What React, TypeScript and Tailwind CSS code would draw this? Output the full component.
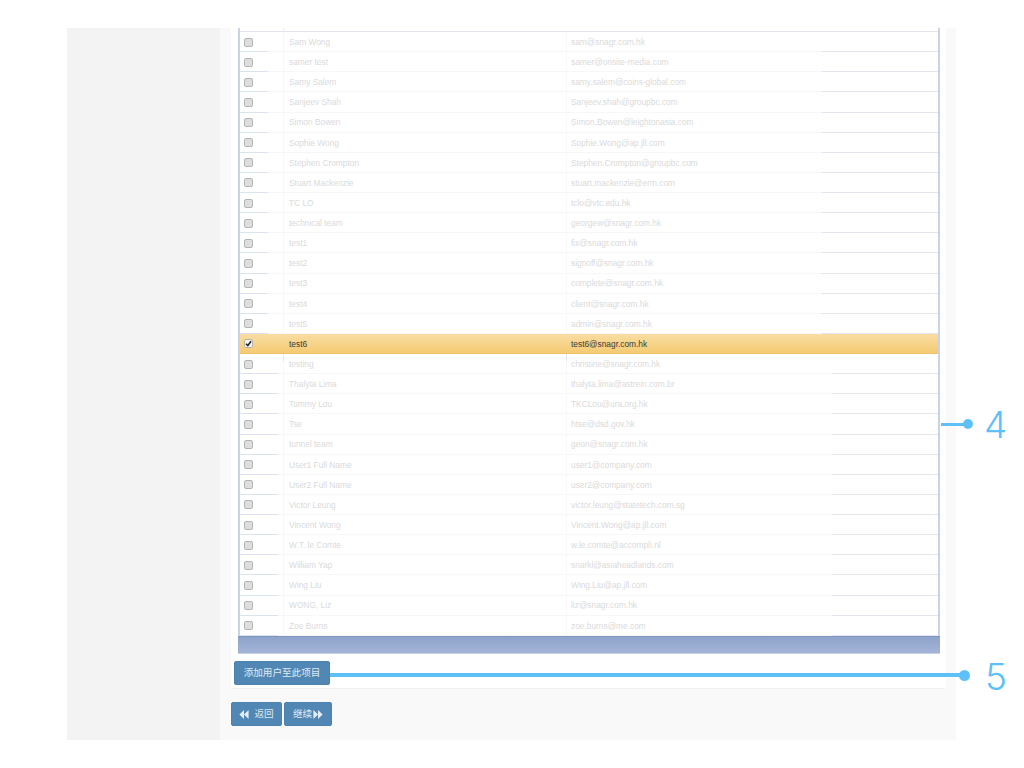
const USERS = [
  ["Sam Wong", "sam@snagr.com.hk"],
  ["samer test", "samer@onsite-media.com"],
  ["Samy Salem", "samy.salem@coins-global.com"],
  ["Sanjeev Shah", "Sanjeev.shah@groupbc.com"],
  ["Simon Bowen", "Simon.Bowen@leightonasia.com"],
  ["Sophie Wong", "Sophie.Wong@ap.jll.com"],
  ["Stephen Crompton", "Stephen.Crompton@groupbc.com"],
  ["Stuart Mackenzie", "stuart.mackenzie@erm.com"],
  ["TC LO", "tclo@vtc.edu.hk"],
  ["technical team", "georgew@snagr.com.hk"],
  ["test1", "fix@snagr.com.hk"],
  ["test2", "signoff@snagr.com.hk"],
  ["test3", "complete@snagr.com.hk"],
  ["test4", "client@snagr.com.hk"],
  ["test5", "admin@snagr.com.hk"],
  ["test6", "test6@snagr.com.hk"],
  ["testing", "christine@snagr.com.hk"],
  ["Thalyta Lima", "thalyta.lima@astrein.com.br"],
  ["Tommy Lou", "TKCLou@ura.org.hk"],
  ["Tse", "htse@dsd.gov.hk"],
  ["tunnel team", "geon@snagr.com.hk"],
  ["User1 Full Name", "user1@company.com"],
  ["User2 Full Name", "user2@company.com"],
  ["Victor Leung", "victor.leung@statetech.com.sg"],
  ["Vincent Wong", "Vincent.Wong@ap.jll.com"],
  ["W.T. le Comte", "w.le.comte@accompli.nl"],
  ["William Yap", "snarkl@asiaheadlands.com"],
  ["Wing Liu", "Wing.Liu@ap.jll.com"],
  ["WONG, Liz", "liz@snagr.com.hk"],
  ["Zoe Burns", "zoe.burns@me.com"],
];

const SELECTED = 15;

function Checkbox({ checked }: { checked: boolean }) {
  return (
    <div
      className={`flex h-[9px] w-[9px] items-center justify-center rounded-[2px] border border-[#b4b4b4] ${
        checked ? "bg-[#f4f4f4]" : "bg-[#dedede]"
      }`}
    >
      {checked && (
        <svg width="7" height="7" viewBox="0 0 7 7" fill="none">
          <path d="M1 3.8 2.8 5.6 6 1.2" stroke="#222" strokeWidth="1.6" />
        </svg>
      )}
    </div>
  );
}

function Row({ name, email, index }: { name: string; email: string; index: number }) {
  const selected = index === SELECTED;
  const lower = index > SELECTED;

  if (selected) {
    return (
      <div className="flex h-[20.14px] items-center border-b border-[#f0bf6e] bg-gradient-to-b from-[#f8dda2] to-[#f5cb72] text-[#3a3a3a]">
        <div className="flex w-[43px] items-center pl-[4px]">
          <Checkbox checked />
        </div>
        <div className="w-[283px] pl-[6px] pt-[1px]">{name}</div>
        <div className="pl-[5px] pt-[1px]">{email}</div>
      </div>
    );
  }

  return (
    <div className="relative flex h-[20.14px] flex-col">
      <div className="flex min-h-0 flex-1 items-center text-[#dadada]">
        <div className="flex w-[43px] items-center pl-[4px] pt-[1px]">
          <Checkbox checked={false} />
        </div>
        <div className="flex h-full w-[283px] items-center border-l border-[#f8f8f8] pl-[5px] pt-[1px]">{name}</div>
        <div className="flex h-full flex-1 items-center border-l border-[#f8f8f8] pl-[4px] pt-[1px]">{email}</div>
      </div>
      <div className="flex h-px shrink-0">
        <div className={`bg-[#dbe2f0] ${lower ? "w-[38px]" : "w-[28px]"}`} />
        <div className="flex-1 bg-[#f7f7f7]" />
        <div className={`bg-[#e3e4ee] ${lower ? "w-[106px]" : "w-[116px]"}`} />
      </div>
      {index === SELECTED + 1 && (
        <>
          <div className="absolute left-[43px] top-0 h-[7px] w-px bg-[#e2e5f0]" />
          <div className="absolute left-[326px] top-0 h-[7px] w-px bg-[#e2e5f0]" />
        </>
      )}
    </div>
  );
}

function BackIcon({ flip }: { flip?: boolean }) {
  return (
    <svg width="10" height="9" viewBox="0 0 10 9" fill="#e4edf4" className={flip ? "rotate-180" : ""}>
      <path d="M5 0v9L0.4 4.5zM9.6 0v9L5 4.5z" />
    </svg>
  );
}

export default function App() {
  return (
    <div
      className="relative h-[768px] w-[1024px] overflow-hidden bg-white pl-[67px] pt-[28px] text-[8.35px] leading-none"
      style={{ fontFamily: '"Liberation Sans", "Noto Sans CJK SC", sans-serif' }}
    >
      <div className="flex h-[712px] w-[889px]">
        <aside className="w-[153px] shrink-0 bg-[#f3f3f3]" />
        <main className="flex flex-1 flex-col bg-[#f9f9f9] pl-[11px] pr-[10px]">
          <div className="h-[660px] rounded-b-[2px] bg-white pl-[7px] pr-[6px] shadow-[0_1px_1px_rgba(0,0,0,0.04)]">
            <div className="flex flex-col border-x-2 border-x-[#c9d3e4]">
              <div className="flex h-[3px] pl-[43px]">
                <div className="w-px bg-[#ececf2]" />
              </div>
              <div className="h-px bg-[#e2e3ee]" />
              {USERS.map(([name, email], i) => (
                <Row key={email} name={name} email={email} index={i} />
              ))}
              <div className="mx-[-2px] h-[18px] border-b border-b-[#c6d0e2] border-t border-t-[#7f96c2] bg-gradient-to-b from-[#8fa4cb] to-[#a3b4d6]" />
            </div>
            <button
              type="button"
              className="ml-[-4px] mt-[7px] h-[24px] w-[96px] rounded-[2px] border border-[#4b82b0] bg-[#5087b4] text-[9.6px] text-[#e0eaf2]"
            >
              添加用户至此项目
            </button>
          </div>
          <div className="mt-[14px] flex gap-[2px]">
            <button
              type="button"
              className="flex h-[24px] w-[51px] items-center justify-center gap-[5px] rounded-[2px] border border-[#4b82b0] bg-[#5087b4] text-[9.6px] text-[#e0eaf2]"
            >
              <BackIcon />
              返回
            </button>
            <button
              type="button"
              className="flex h-[24px] w-[48px] items-center justify-center gap-[1px] rounded-[2px] border border-[#4b82b0] bg-[#5087b4] text-[9.6px] text-[#e0eaf2]"
            >
              继续
              <BackIcon flip />
            </button>
          </div>
        </main>
      </div>

      {/* callout 4 */}
      <div className="absolute left-[941px] top-[422.5px] h-[3px] w-[26px] bg-[#5fc0f8]" />
      <div className="absolute left-[963px] top-[419px] h-[10px] w-[10px] rounded-full bg-[#5fc0f8]" />
      <div
        className="absolute left-[984px] top-[406px] text-[37px] font-light leading-[37px] text-[#5fc0f8]"
        style={{ fontFamily: "Inter, sans-serif" }}
      >
        4
      </div>

      {/* callout 5 */}
      <div className="absolute left-[330px] top-[673px] h-[4px] w-[632px] bg-[#5fc0f8]" />
      <div className="absolute left-[959px] top-[670px] h-[11px] w-[11px] rounded-full bg-[#5fc0f8]" />
      <div
        className="absolute left-[985px] top-[658px] text-[37px] font-light leading-[37px] text-[#5fc0f8]"
        style={{ fontFamily: "Inter, sans-serif" }}
      >
        5
      </div>
    </div>
  );
}
